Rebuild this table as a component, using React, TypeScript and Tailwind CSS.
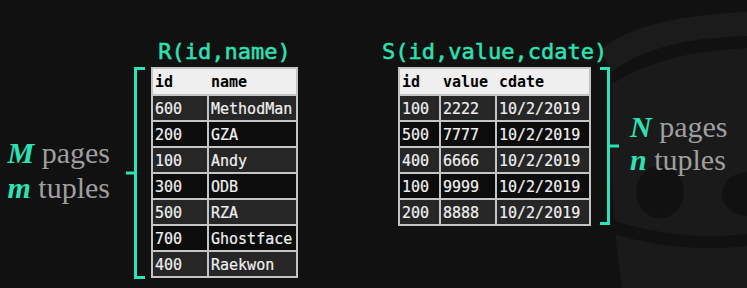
import type { ReactNode } from "react";

const rTable = {
  cols: ["w-[54px]", "w-[87px]"],
  head: ["id", "name"],
  rows: [
    ["600", "MethodMan"],
    ["200", "GZA"],
    ["100", "Andy"],
    ["300", "ODB"],
    ["500", "RZA"],
    ["700", "Ghostface"],
    ["400", "Raekwon"],
  ],
};

const sTable = {
  cols: ["w-[39px]", "w-[54px]", "w-[92px]"],
  head: ["id", "value", "cdate"],
  rows: [
    ["100", "2222", "10/2/2019"],
    ["500", "7777", "10/2/2019"],
    ["400", "6666", "10/2/2019"],
    ["100", "9999", "10/2/2019"],
    ["200", "8888", "10/2/2019"],
  ],
};

function DataTable({ cols, head, rows }: { cols: string[]; head: string[]; rows: string[][] }) {
  return (
    <div className="flex flex-col gap-[2px] bg-[#c4c4c4] p-[2px] font-['DejaVu_Sans_Mono',monospace] text-[15px]">
      <div className="flex gap-[2px] bg-[#efefef]">
        {head.map((h, i) => (
          <div key={h} className={`${cols[i]} h-[25px] flex items-center pl-[2px] pt-[1px] font-bold text-black`}>
            {h}
          </div>
        ))}
      </div>
      {rows.map((row, r) => (
        <div key={r} className="flex gap-[2px]">
          {row.map((c, i) => (
            <div
              key={i}
              className={`${cols[i]} h-[24px] flex items-center pl-[2px] pt-[2px] text-[#f0f0f0] [-webkit-text-stroke:0.2px_#f0f0f0] ${
                r % 2 === 0 ? "bg-[#262626]" : "bg-[#0c0c0c]"
              }`}
            >
              {c}
            </div>
          ))}
        </div>
      ))}
    </div>
  );
}

function Title({ children }: { children: ReactNode }) {
  return (
    <div className="h-[26px] leading-[26px] mb-[2px] font-['DejaVu_Sans_Mono',monospace] text-[22px] text-[#2de2b5] [-webkit-text-stroke:0.5px_#2de2b5] whitespace-nowrap">
      {children}
    </div>
  );
}

export default function App() {
  return (
    <div className="relative w-[747px] h-[288px] overflow-hidden bg-[#111111]">
      {/* faint logo in the back */}
      <svg className="absolute inset-0" width="747" height="288" viewBox="0 0 747 288">
        <path d="M600 50 Q640 16 747 12 L747 36 Q655 38 612 72 Z" fill="#1b1b1b" />
        <path d="M612 84 Q660 52 747 48 L747 288 L622 288 Q608 200 612 84 Z" fill="#1a1a1a" />
        <ellipse cx="660" cy="192" rx="24" ry="26" fill="#111111" />
        <ellipse cx="748" cy="194" rx="26" ry="22" fill="#111111" />
        <path d="M612 220 Q680 242 747 234 L747 246 Q680 254 614 234 Z" fill="#111111" />
      </svg>

      <div className="relative flex items-start pt-[39px]">
        <div className="w-[125px] pr-[15px] pt-[96px] text-right font-['Liberation_Serif',serif] text-[30px] leading-[35px] text-[#9f9f9f] whitespace-nowrap">
          <div>
            <span className="font-bold italic text-[#2de2b5]">M</span> pages
          </div>
          <div>
            <span className="font-bold italic text-[#2de2b5]">m</span> tuples
          </div>
        </div>

        <svg className="mt-[28px]" width="26" height="212" viewBox="0 0 26 212">
          <path d="M20 1.5 H10.5 V210.5 H20 M1 106 H10.5" fill="none" stroke="#2de2b5" strokeWidth="3" />
        </svg>

        <div className="flex flex-col items-center">
          <Title>R(id,name)</Title>
          <DataTable {...rTable} />
        </div>

        <div className="ml-[84px] flex flex-col items-start">
          <Title>S(id,value,cdate)</Title>
          <div className="ml-[16px] flex items-start">
            <DataTable {...sTable} />
            <svg className="ml-[9px]" width="20" height="158" viewBox="0 0 20 158">
              <path d="M0 1.5 H8.5 V156.5 H0 M8.5 79 H19" fill="none" stroke="#2de2b5" strokeWidth="3" />
            </svg>
          </div>
        </div>

        <div className="ml-[10px] mt-[71px] font-['Liberation_Serif',serif] text-[30px] leading-[33px] text-[#9f9f9f] whitespace-nowrap">
          <div>
            <span className="font-bold italic text-[#2de2b5]">N</span> pages
          </div>
          <div>
            <span className="font-bold italic text-[#2de2b5]">n</span> tuples
          </div>
        </div>
      </div>
    </div>
  );
}
